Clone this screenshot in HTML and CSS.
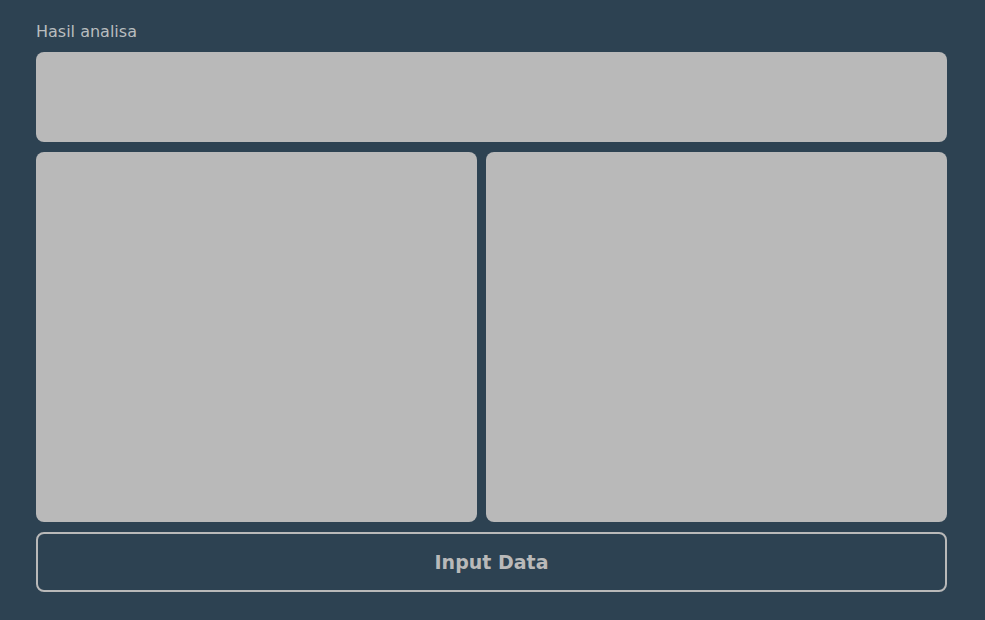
FILE: index.html
```html
<!DOCTYPE html>
<html>
<head>
<meta charset="utf-8">
<link rel="stylesheet" href="styles.css">
</head>
<body>
<div class="page">
  <div class="label">Hasil analisa</div>
  <div class="panel top"></div>
  <div class="row">
    <div class="panel left"></div>
    <div class="panel right"></div>
  </div>
  <button class="btn">Input Data</button>
</div>
</body>
</html>
```
FILE: styles.css
```css
html, body {
  margin: 0;
  padding: 0;
  background: #2d4252;
  height: 100%;
}
.page {
  width: 911px;
  margin-left: 36px;
  padding-top: 20px;
  display: flex;
  flex-direction: column;
  gap: 10px;
  font-family: "DejaVu Sans", Verdana, sans-serif;
}
.label {
  color: #b9bdbf;
  font-size: 16px;
  line-height: 23px;
  margin-bottom: -10px;
  height: 32px;
}
.panel {
  background: #b9b9b9;
  border-radius: 8px;
}
.top {
  height: 90px;
}
.row {
  display: flex;
  gap: 9px;
  height: 370px;
}
.left {
  width: 441px;
}
.right {
  flex: 1;
}
.btn {
  height: 60px;
  background: transparent;
  border: 2px solid #b9b9b9;
  border-radius: 8px;
  color: #b9b9b9;
  font-family: "DejaVu Sans", Verdana, sans-serif;
  font-weight: bold;
  font-size: 19px;
  padding: 0;
}
```
